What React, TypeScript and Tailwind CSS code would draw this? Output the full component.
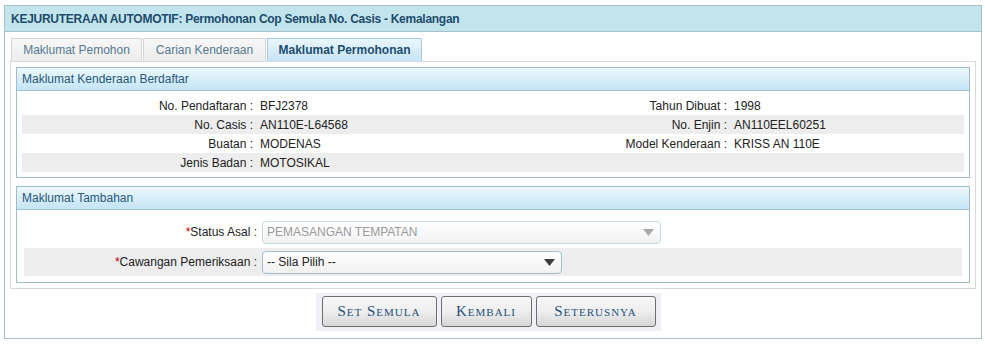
import React from "react";

const vehicleRows = [
  ["No. Pendaftaran", "BFJ2378", "Tahun Dibuat", "1998"],
  ["No. Casis", "AN110E-L64568", "No. Enjin", "AN110EEL60251"],
  ["Buatan", "MODENAS", "Model Kenderaan", "KRISS AN 110E"],
  ["Jenis Badan", "MOTOSIKAL", "", ""],
];

const tabs = [
  { label: "Maklumat Pemohon", w: "w-[131px]" },
  { label: "Carian Kenderaan", w: "w-[123px]" },
  { label: "Maklumat Permohonan", w: "w-[155px]" },
];

const Caret = ({ dark }: { dark?: boolean }) => (
  <svg width="11" height="7" viewBox="0 0 11 7">
    <path d="M0 0 L11 0 L5.5 7 Z" fill={dark ? "#3c3c3c" : "#a9a9a9"} />
  </svg>
);

const SectionHeader = ({ title }: { title: string }) => (
  <div className="h-[23px] flex items-center px-[5px] border-b border-[#a3c2d2] bg-gradient-to-b from-[#ecf8fe] to-[#c3e4f5] text-[#2a5878]">
    {title}
  </div>
);

const App = () => {
  return (
    <div
      className="w-[985px] h-[358px] bg-white pt-[5px] pl-[4px] text-[12px] text-[#222]"
      style={{ fontFamily: '"Liberation Sans", Arial, sans-serif' }}
    >
      <div className="w-[978px] h-[334px] border border-[#a6bfca] bg-white">
        {/* page title */}
        <div className="h-[26px] flex items-center px-[6px] bg-[#c2e5ed] border-b border-[#a6bfca] text-[#1e4b6c] font-bold tracking-[-0.27px]">
          KEJURUTERAAN AUTOMOTIF: Permohonan Cop Semula No. Casis - Kemalangan
        </div>

        <div className="px-[5px] pt-[5px]">
          {/* tabs */}
          <div className="flex gap-[1px] pl-[1px] h-[24px] items-end">
            {tabs.map((t, i) =>
              i === 2 ? (
                <div
                  key={t.label}
                  className={`${t.w} h-[23px] flex items-center justify-center border border-b-0 border-[#a9cde0] bg-gradient-to-b from-[#eaf6fc] to-[#c6e5f4] text-[#1c4d70] font-bold`}
                >
                  {t.label}
                </div>
              ) : (
                <div
                  key={t.label}
                  className={`${t.w} h-[23px] flex items-center justify-center border border-b-0 border-[#d6d6d6] bg-gradient-to-b from-[#f7f7f7] to-[#ececec] text-[#557a91]`}
                >
                  {t.label}
                </div>
              )
            )}
          </div>

          {/* tab content */}
          <div className="w-[966px] border border-[#d9d9d9] p-[5px]">
            <div className="border border-[#9fbccb]">
              <SectionHeader title="Maklumat Kenderaan Berdaftar" />
              <div className="px-[5px] pt-[5px] pb-[5px]">
                {vehicleRows.map((r, i) => (
                  <div
                    key={i}
                    className={`grid grid-cols-[235px_237px_237px_1fr] h-[19px] items-center ${
                      i % 2 === 1 ? "bg-[#ededed]" : "bg-white"
                    }`}
                  >
                    <div className="text-right pr-[4px]">{r[0]} :</div>
                    <div className="pl-[3px]">{r[1]}</div>
                    <div className="text-right pr-[4px]">{r[2] ? `${r[2]} :` : ""}</div>
                    <div className="pl-[3px]">{r[3]}</div>
                  </div>
                ))}
              </div>
            </div>

            <div className="mt-[8px] border border-[#9fbccb]">
              <SectionHeader title="Maklumat Tambahan" />
              <div className="px-[7px] pt-[8px] pb-[6px] flex flex-col gap-[2px]">
                <div className="h-[28px] flex items-center">
                  <div className="w-[236px] text-right pr-[3px]">
                    <span className="text-[#c00000]">*</span>Status Asal :
                  </div>
                  <div className="ml-[2px] w-[399px] h-[23px] rounded-[4px] border border-[#c3dbe6] bg-gradient-to-b from-white to-[#f2f2f2] flex items-center justify-between pl-[4px] pr-[6px] text-[#9a9a9a]">
                    <span>PEMASANGAN TEMPATAN</span>
                    <Caret />
                  </div>
                </div>
                <div className="h-[28px] flex items-center bg-[#ededed]">
                  <div className="w-[236px] text-right pr-[3px]">
                    <span className="text-[#c00000]">*</span>Cawangan Pemeriksaan :
                  </div>
                  <div className="ml-[2px] w-[300px] h-[23px] rounded-[4px] border border-[#9fbfd0] bg-gradient-to-b from-white to-[#f0f0f0] flex items-center justify-between pl-[4px] pr-[6px] text-[#222]">
                    <span>-- Sila Pilih --</span>
                    <Caret dark />
                  </div>
                </div>
              </div>
            </div>
          </div>

          {/* action buttons */}
          <div className="flex justify-center pr-[10px] mt-[4px]">
            <div
              className="flex gap-[4px] bg-[#eef0f5] pt-[3px] pb-[4px] pl-[6px] pr-[5px] text-[#1d527c] text-[15px] tracking-[1px] [font-variant-caps:small-caps]"
              style={{ fontFamily: '"Liberation Serif", "Times New Roman", serif' }}
            >
              {["Set Semula", "Kembali", "Seterusnya"].map((b, i) => (
                <button
                  key={b}
                  className={`h-[31px] ${
                    i === 0 ? "w-[115px]" : i === 1 ? "w-[91px]" : "w-[120px]"
                  } rounded-[3px] border border-[#6f6f6f] bg-gradient-to-b from-[#f7f7f7] via-[#eeeeee] to-[#d6d6d6] flex items-center justify-center`}
                >
                  {b}
                </button>
              ))}
            </div>
          </div>
        </div>
      </div>
    </div>
  );
};

export default App;
